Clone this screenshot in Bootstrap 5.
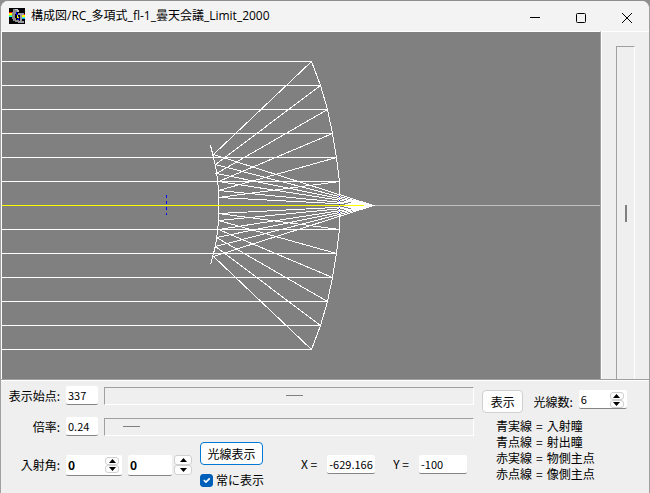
<!DOCTYPE html>
<html lang="ja">
<head>
<meta charset="utf-8">
<meta name="viewport" content="width=device-width, initial-scale=1">
<title>構成図/RC_多項式_fl-1_曇天会議_Limit_2000</title>
<link href="https://cdn.jsdelivr.net/npm/bootstrap@5.3.0/dist/css/bootstrap.min.css" rel="stylesheet">
<style>
body { background: #8f8f8f; color: #000; font: 12px/16px "Noto Sans CJK JP", sans-serif; padding-top: 1px; }
.win { background: #efefef; border: 1px solid #a0a0a0; border-top: 0; border-bottom: 0; border-radius: 8px 8px 0 0; }
.titlebar { background: #f3f3f3; height: 30px; padding-left: 8px; margin-right: -1px; }
.titlebar h1 { font: 12px/18px "Open Sans", "Noto Sans CJK JP", sans-serif; margin-left: 6px; }
.cap { width: 46px; height: 30px; border: 0; background: none; padding: 0; }
.scene { background: #808080; border-left: 1px solid #fff; border-top: 1px solid #fff; }
.scene svg { shape-rendering: crispEdges; }
.side { width: 49px; border-left: 1px solid #a0a0a0; border-top: 1px solid #fff; box-shadow: inset 1px 0 #fff; padding: 14px 14px 0 15px; }
.panel { border-top: 1px solid #a0a0a0; box-shadow: inset 0 1px #fff; padding: 6px 4px 5px; gap: 8px; }
.fld { border: 0; border-bottom: 1px solid #858585; border-radius: 2px; background: #fff; color: #000; height: 19px; padding: 0 2px; font: 11px/16px "Noto Sans CJK JP", sans-serif; min-width: 0; }
.fld.tall { height: 21px; font: bold 12px/18px "Noto Sans CJK JP", sans-serif; }
.w-s { width: 32px; } .w-m { width: 48px; } .w-n { width: 44px; } .w-l { width: 56px; }
.tag { width: 55px; text-align: right; white-space: nowrap; flex: none; }
.bar { appearance: none; -webkit-appearance: none; background: #efefef; border: 1px solid; border-color: #a0a0a0 #fff #fff #a0a0a0; margin: 0; padding: 0; border-radius: 0; }
.bar::-webkit-slider-thumb { -webkit-appearance: none; width: 17px; height: 1px; background: #808080; border: 0; }
.bar.flat { height: 18px; min-width: 0; }
.bar.upright { writing-mode: vertical-lr; width: 19px; border-bottom: 0; }
.bar.upright::-webkit-slider-thumb { width: 2px; height: 17px; }
.spin { display: flex; flex-direction: column; flex: none; }
.spin button { width: 14px; height: 8px; border: 1px solid #d0d0d0; border-radius: 3px; background: #fdfdfd; padding: 0; display: flex; align-items: center; justify-content: center; }
.spin.big button { width: 18px; height: 10px; }
.over { position: absolute; right: 3px; top: 2px; }
.push { border: 1px solid #d0d0d0; border-radius: 4px; background: #fdfdfd; color: #000; font-size: 12px; line-height: 16px; height: 23px; padding: 0 5px; white-space: nowrap; }
.push.main { border-color: #0078d4; width: 63px; }
.tick { width: 13px; height: 13px; margin: 0; border-radius: 3px; }
.tick:checked { background-color: #005fb8; border-color: #005fb8; }
.g-field { gap: 6px; }
.pair { gap: 2px; }
.left-side { gap: 12px; }
.right-side { width: 163px; flex: none; }
.angle { margin-top: -6px; min-height: 46px; }
.stack { gap: 7px; margin-left: 2px; }
.check-row { gap: 3px; }
.coord { gap: 10px; }
.coords { gap: 18px; margin-left: 31px; margin-bottom: 2px; }
.legend-list { padding-left: 14px; margin-top: 5px; }
.legend-list li { display: flex; gap: 4px; }
</style>
<script src="https://cdn.jsdelivr.net/npm/bootstrap@5.3.0/dist/js/bootstrap.bundle.min.js"></script>
</head>
<body class="vh-100 overflow-hidden">
<div class="win d-flex flex-column h-100 overflow-hidden">
  <header class="titlebar d-flex align-items-center flex-shrink-0">
    <svg width="16" height="16" viewBox="0 0 16 16" shape-rendering="crispEdges" aria-hidden="true">
      <path d="M0 0h16v16H0z"/>
      <path d="M0 4h4v1H0z" fill="#f00"/><path d="M0 5h4v2H0z" fill="#ff0"/><path d="M0 7h4v1H0z" fill="#5f5"/><path d="M0 8h4v1H0z" fill="#0ff"/>
      <path d="M12 6h4v1h-4z" fill="#f00"/><path d="M12 7h4v2h-4z" fill="#ff0"/><path d="M12 9h4v1h-4z" fill="#5fc"/><path d="M12 10h4v1h-4z" fill="#0af"/>
      <path d="M4 1h4v1h1v2H7v2H6v4h1v2h3v1h1v1H6v-1H4v-2H3V4h1z" fill="#8a8a8a"/>
      <path d="M6 1h3v1h1v2H8V2H6z" fill="#c4c4c4"/>
      <path d="M9 5h6v2h-2v6h2v2H9v-2h2V7H9z" fill="#9a9aa4"/>
      <path d="M7 4h1v2h1v2h1v3H9V9H8V7H7zM8 11h2v1H8z" fill="#00f"/><path d="M8 7h1v2h1v1H8z" fill="#ff0"/>
    </svg>
    <h1 class="mb-0 me-auto text-nowrap">構成図/RC_多項式_fl-1_曇天会議_Limit_2000</h1>
    <button class="cap" aria-label="最小化"><svg width="10" height="10" stroke="#000"><path d="M0 4.500h10"/></svg></button>
    <button class="cap" aria-label="最大化"><svg width="10" height="10" stroke="#000" fill="none"><rect x=".5" y=".5" width="9" height="9" rx="1"/></svg></button>
    <button class="cap" aria-label="閉じる"><svg width="10" height="10" stroke="#000"><path d="M0 0l10 10M10 0L0 10"/></svg></button>
  </header>
  <main class="d-flex flex-grow-1" style="min-height:0">
    <div class="scene flex-grow-1 overflow-hidden">
      <svg class="d-block w-100 h-100" viewBox="1.5 31.5 598 347" preserveAspectRatio="xMinYMid slice" fill="none" stroke="#fff" role="img" aria-label="光線図">
        <path stroke="#c0c0c0" d="M373 205H610"/>
        <path d="M0 61H311M0 85H320M0 109H327M0 133H332M0 157H336M0 181H339M0 229H339M0 253H336M0 277H332M0 301H327M0 325H320M0 349H311"/>
        <path d="M311 61L320 85L327 109L332 133L336 157L339 181V229L336 253L332 277L327 301L320 325L311 349"/>
        <path d="M210 145L213 157L215 165L217 179L218 190V220L217 231L215 245L213 253L210 264"/>
        <path d="M311 61L213 154L373 205L213 256L311 349M320 85L215 164L373 205L215 246L320 325M327 109L216 173L373 205L216 237L327 301M332 133L218 181L373 205L218 229L332 277M336 157L218 190L373 205L218 220L336 253M339 181L218 197L373 205L218 213L339 229"/>
        <path stroke="#ff0" d="M0 205H363"/>
        <path stroke="#00f" d="M166 194V197M166 200V203M166 206V209M166 212V214M339 195V196M339 199V200M339 203V204M339 207V208M339 211V212"/>
      </svg>
    </div>
    <div class="side d-flex flex-shrink-0">
      <input type="range" class="bar upright h-100" min="0" max="100" value="50" aria-label="縦位置">
    </div>
  </main>
  <form class="panel d-flex flex-shrink-0">
    <div class="left-side d-flex flex-column flex-grow-1">
      <div class="d-flex align-items-center g-field">
        <label class="tag" for="start">表示始点:</label>
        <input id="start" class="fld w-s" value="337">
        <input type="range" class="bar flat flex-grow-1" min="0" max="1000" value="515" aria-label="表示始点の調整">
      </div>
      <div class="d-flex align-items-center g-field">
        <label class="tag" for="zoom">倍率:</label>
        <input id="zoom" class="fld w-s" value="0.24">
        <input type="range" class="bar flat flex-grow-1" min="0" max="100" value="5" aria-label="倍率の調整">
      </div>
      <div class="angle d-flex align-items-center g-field">
        <label class="tag" for="ang">入射角:</label>
        <div class="position-relative d-flex">
          <input id="ang" class="fld tall w-l" value="0">
          <div class="spin over">
            <button type="button" aria-label="増"><svg width="7" height="4"><path d="M0 4L3.500 0L7 4z"/></svg></button>
            <button type="button" aria-label="減"><svg width="7" height="4"><path d="M0 0L3.500 4L7 0z"/></svg></button>
          </div>
        </div>
        <div class="pair d-flex align-items-center">
          <input class="fld tall w-n" value="0" aria-label="入射角 2">
          <div class="spin big">
            <button type="button" aria-label="増"><svg width="7" height="4"><path d="M0 4L3.500 0L7 4z"/></svg></button>
            <button type="button" aria-label="減"><svg width="7" height="4"><path d="M0 0L3.500 4L7 0z"/></svg></button>
          </div>
        </div>
        <div class="stack d-flex flex-column">
          <button type="button" class="push main">光線表示</button>
          <div class="check-row d-flex align-items-center text-nowrap">
            <input class="form-check-input tick" type="checkbox" id="always" checked>
            <label for="always">常に表示</label>
          </div>
        </div>
        <div class="coords d-flex">
          <div class="coord d-flex align-items-center text-nowrap"><label for="cx">X =</label><input id="cx" class="fld w-m" value="-629.166"></div>
          <div class="coord d-flex align-items-center text-nowrap"><label for="cy">Y =</label><input id="cy" class="fld w-m" value="-100"></div>
        </div>
      </div>
    </div>
    <div class="right-side">
      <div class="d-flex align-items-center g-field pt-1">
        <button type="button" class="push me-1">&nbsp;表示&nbsp;</button>
        <label for="rays" class="text-nowrap">光線数:</label>
        <div class="position-relative d-flex align-self-start">
          <input id="rays" class="fld w-m" value="6">
          <div class="spin over">
            <button type="button" aria-label="増"><svg width="7" height="4"><path d="M0 4L3.500 0L7 4z"/></svg></button>
            <button type="button" aria-label="減"><svg width="7" height="4"><path d="M0 0L3.500 4L7 0z"/></svg></button>
          </div>
        </div>
      </div>
      <ul class="legend-list list-unstyled mb-0">
        <li><span>青実線</span><span>=</span><span>入射瞳</span></li>
        <li><span>青点線</span><span>=</span><span>射出瞳</span></li>
        <li><span>赤実線</span><span>=</span><span>物側主点</span></li>
        <li><span>赤点線</span><span>=</span><span>像側主点</span></li>
      </ul>
    </div>
  </form>
</div>
</body>
</html>
